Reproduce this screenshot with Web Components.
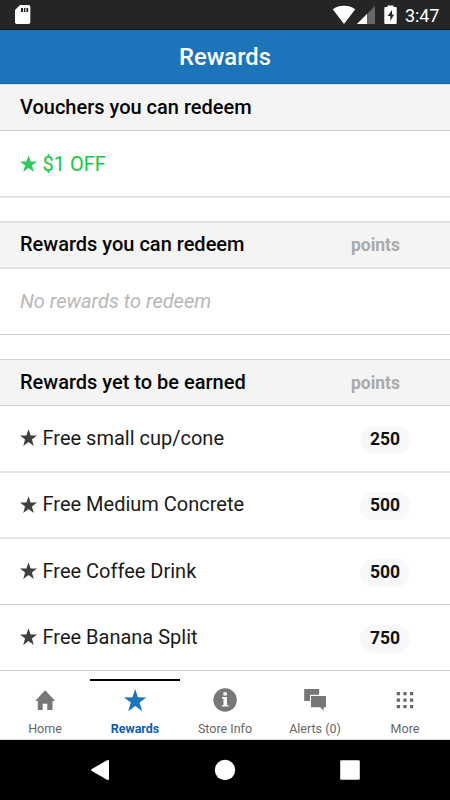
<!DOCTYPE html>
<html lang="en"><head><meta charset="utf-8"><title>Rewards</title>
<style>body{margin:0;background:#fff;font-family:Roboto,sans-serif}</style></head>
<body><rewards-app></rewards-app>
<script>
const STAR='M12 1.2l2.75 7.7 8.25.15-6.55 4.9 2.35 7.9L12 17.15 5.2 21.85l2.35-7.9L1 9.05l8.25-.15z';
function define(name, html){
  const t=document.createElement('template');t.innerHTML=html;
  customElements.define(name,class extends HTMLElement{
    constructor(){super();this.attachShadow({mode:'open'}).append(t.content.cloneNode(true));}
  });
}
define('status-bar',`<style>:host{display:block;height:30px;box-sizing:border-box;background:#252525;border-bottom:1px solid #17191c;color:#fff;font-size:18px}
.bar{display:flex;height:29px;justify-content:space-between}svg{display:block}.right{display:flex}time{width:45px;line-height:31px;letter-spacing:-.12px}</style>
<div class="bar"><svg width="40" height="29"><path d="M20 5h8.5q1.8 0 1.8 1.8v15.4q0 1.8-1.8 1.8h-11.7q-1.8 0-1.8-1.8V10z" fill="#fff"/><path d="M21 8h2v4h-2zm2.9 0h1.5v4h-1.5zm2.5 0h1.8v4h-1.8z" fill="#252525"/></svg>
<div class="right"><svg width="74" height="29" viewBox="331 0 74 29"><path d="M331.7 9.3C338 4.7 348 4.7 354.3 9.3L343 24z" fill="#fff" transform="translate(1 0)"/><path d="M375 6v18h-18z" fill="#666"/><path d="M367 14v10h-10z" fill="#fff"/><path d="M387.5 5.5h6V7h2.3q.9 0 .9.9v15.2q0 .9-.9.9h-10.6q-.9 0-.9-.9V7.9q0-.9.9-.9h2.3z" fill="#fff"/><path d="M392 10l-4.3 6h2.6v5l3.8-6.5H392z" fill="#252525"/></svg><time>3:47</time></div></div>`);
define('title-bar',`<style>:host{display:block;height:54px;box-sizing:border-box;background:#1e74bb;border-bottom:1px solid #0e61ac;color:#fff;font-weight:500;font-size:23.75px;line-height:54px;text-align:center}</style><slot></slot>`);
define('section-head',`<style>:host{display:flex;box-sizing:border-box;height:47px;padding:0 50px 2px 20px;background:#f4f4f4;border:solid #d2d2d2;border-width:1px 0;align-items:center;justify-content:space-between;font-weight:500;font-size:20px;line-height:24px;color:#050505}
:host([soft]){height:48px;border-color:#e2e2e2;border-width:2px 0}:host([first]){border-top-color:#dde2e7}
::slotted([slot=aside]){font-size:17.5px;font-weight:700;color:#aaa;position:relative;top:1px}</style><slot></slot><slot name="aside"></slot>`);
define('star-icon',`<style>:host{display:block;width:17px;height:17px;margin-right:5.5px}svg{display:block;width:100%;height:100%}</style><svg viewBox="1 1 22 21" preserveAspectRatio="none"><path fill="currentColor" d="${STAR}"/></svg>`);
define('list-row',`<style>:host{display:flex;box-sizing:border-box;height:66px;padding:0 40px 2px 20px;border-bottom:1px solid #d2d2d2;align-items:center;font-size:20px;line-height:24px;color:#1a1a1a}
:host([soft]){border-bottom:2px solid #e4e4e4}:host([tall]){height:67px}:host([green]){color:#14c83c;padding-bottom:0}:host([empty]){color:#b8b8b8;font-style:italic}
star-icon{color:#404040}:host([green]) star-icon{color:#2dcc5d}:host([empty]) star-icon{display:none}
.end{margin-left:auto}</style><star-icon></star-icon><span><slot></slot></span><div class="end"><slot name="points"></slot></div>`);
define('point-badge',`<style>:host{display:block;box-sizing:border-box;width:50px;height:28px;border-radius:14px;background:#f8f8f8;text-align:center;font-weight:700;font-size:17.5px;line-height:26px;color:#111;margin-top:4px}</style><slot></slot>`);
define('tab-item',`<style>:host{display:flex;flex-direction:column;align-items:center;box-sizing:border-box;border-top:2px solid transparent;color:#666;font-size:12.5px;height:60px;padding-top:6px}
:host([active]){border-top-color:#000;color:#0d5db4;font-weight:700}
::slotted(svg){display:block;width:28px;height:28px}.label{line-height:16px;margin-top:6px;white-space:nowrap}</style><slot name="icon"></slot><div class="label"><slot></slot></div>`);
define('tab-bar',`<style>:host{display:grid;grid-template-columns:repeat(5,90px);box-sizing:border-box;height:69px;padding-top:8px;background:#fff;border-bottom:1px solid #ddd}</style><slot></slot>`);
define('system-nav',`<style>:host{display:block;height:60px;background:#000}svg{display:block}</style><svg width="450" height="60"><path d="M91.8 29.1L107 20.3q2-1 2 1v17.4q0 2-2 1L91.8 30.9q-1.3-.9 0-1.8z" fill="#fff"/><circle cx="225" cy="30" r="10.2" fill="#fff"/><rect x="340.2" y="20.2" width="19.6" height="19.6" rx="1.3" fill="#fff"/></svg>`);
define('rewards-app',`<style>:host{display:flex;flex-direction:column;width:450px;height:800px;overflow:hidden}.gap{height:24px}.gap.short{height:23px}</style>
<status-bar></status-bar><title-bar>Rewards</title-bar>
<section-head first>Vouchers you can redeem</section-head>
<list-row green soft tall>$1 OFF</list-row><div class="gap short"></div>
<section-head soft>Rewards you can redeem<span slot="aside">points</span></section-head>
<list-row empty>No rewards to redeem</list-row><div class="gap"></div>
<section-head>Rewards yet to be earned<span slot="aside">points</span></section-head>
<list-row soft tall>Free small cup/cone<point-badge slot="points">250</point-badge></list-row>
<list-row soft>Free Medium Concrete<point-badge slot="points">500</point-badge></list-row>
<list-row>Free Coffee Drink<point-badge slot="points">500</point-badge></list-row>
<list-row>Free Banana Split<point-badge slot="points">750</point-badge></list-row>
<tab-bar>
<tab-item><svg slot="icon" viewBox="0 0 28 28"><path fill="#777" d="M14.2 3.2L4.2 14h2.6v9h4.9v-6.2h4.6V23h5.2v-9h2.7z"/></svg>Home</tab-item>
<tab-item active><svg slot="icon" viewBox="0 0 28 28"><path fill="#1e74bb" d="M14.2 2l2.7 8.3 8.5.1-6.8 5.2 2.6 8.6-7-5.2-7 5.2 2.6-8.6-6.8-5.2 8.5-.1z"/></svg>Rewards</tab-item>
<tab-item><svg slot="icon" viewBox="0 0 28 28"><circle cx="14.1" cy="13" r="11.7" fill="#777"/><path fill="#fff" d="M12.4 5.3h3.5v3.2h-3.5zM11 10h5v8.2h1.6v1.4h-6.7v-1.4h1.6v-6.8H11z"/></svg>Store Info</tab-item>
<tab-item><svg slot="icon" viewBox="0 0 28 28"><path fill="#777" d="M3.2 2h15v5.7H9V14H3.2zM10 9h15v11.3h-2.3v3.5l-3.5-3.5H10z"/></svg>Alerts (0)</tab-item>
<tab-item><svg slot="icon" viewBox="0 0 28 28"><path fill="#666" d="M5.8 5H9v3.2H5.8zm6.6 0h3.2v3.2h-3.2zM19 5h3.2v3.2H19zM5.8 11.5H9v3.2H5.8zm6.6 0h3.2v3.2h-3.2zm6.6 0h3.2v3.2H19zM5.8 18H9v3.2H5.8zm6.6 0h3.2v3.2h-3.2zm6.6 0h3.2v3.2H19z"/></svg>More</tab-item>
</tab-bar><system-nav></system-nav>`);
</script></body></html>
